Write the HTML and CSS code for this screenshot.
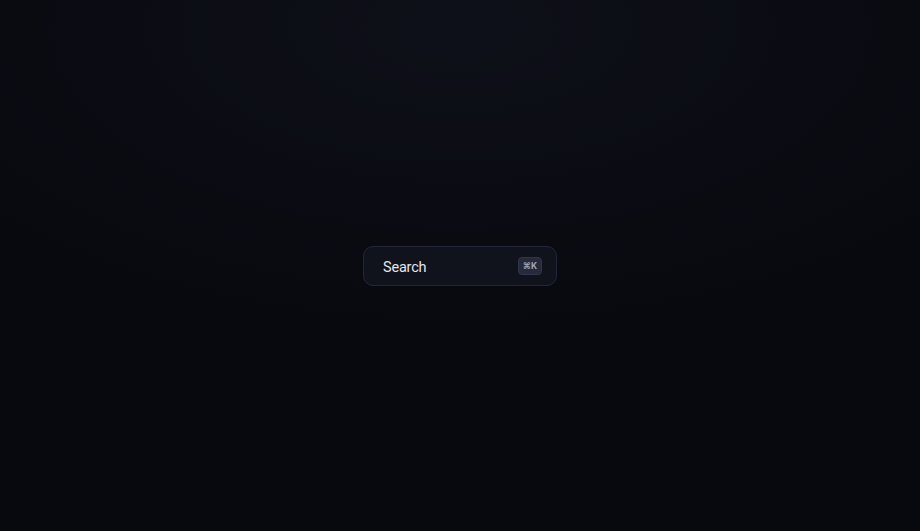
FILE: index.html
```html
<!DOCTYPE html>
<html>
<head>
<meta charset="utf-8">
<link rel="stylesheet" href="styles.css">
</head>
<body>
<main class="stage">
  <div class="search">
    <span class="label">Search</span>
    <kbd class="kbd">⌘K</kbd>
  </div>
</main>
</body>
</html>
```
FILE: styles.css
```css
html, body {
  margin: 0;
  height: 100%;
}
body {
  background: radial-gradient(ellipse 70% 60% at 50% 5%, #0e1019 0%, #0b0c13 55%, #08090e 100%);
  font-family: Inter, "Noto Sans", sans-serif;
}
.stage {
  height: 531px;
  display: flex;
  align-items: center;
  justify-content: center;
}
.search {
  box-sizing: border-box;
  width: 194px;
  height: 40px;
  margin-top: 1px;
  display: flex;
  align-items: center;
  justify-content: space-between;
  padding: 0 14px 0 19px;
  background: #11131c;
  border: 1px solid #23263a;
  border-radius: 10px;
}
.label {
  color: #e3e5ee;
  font-family: Roboto, Inter, sans-serif;
  font-size: 14.5px;
  font-weight: 400;
  letter-spacing: -0.2px;
  padding-top: 2px;
}
.kbd {
  box-sizing: border-box;
  width: 24px;
  height: 18px;
  display: flex;
  align-items: center;
  justify-content: center;
  background: #262a3a;
  border: 1px solid #30354a;
  border-radius: 4px;
  color: #a3a7ba;
  font-family: Inter, "DejaVu Sans", sans-serif;
  font-size: 8.5px;
  font-weight: 700;
}
```
